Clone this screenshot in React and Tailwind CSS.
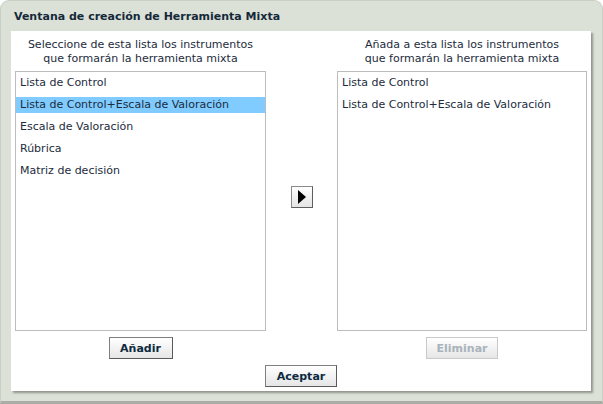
import React from "react";

const font = { fontFamily: '"DejaVu Sans", Verdana, sans-serif' };

function Btn({ children, disabled, w }) {
  return (
    <button
      className={`${w} h-[22px] border text-[11px] font-bold leading-none flex items-center justify-center bg-gradient-to-b from-white to-[#e6e6e6] ${
        disabled
          ? "border-[#c9c9c9] text-[#a9b3bb]"
          : "border-[#7f7f7f] border-b-[#5a5a5a] border-r-[#5a5a5a] text-[#0d2a40]"
      }`}
      style={font}
    >
      {children}
    </button>
  );
}

function List({ items, selected }) {
  return (
    <div className="h-[260px] border border-[#bcbcbc] bg-white pt-[3px] flex flex-col gap-[6px]">
      {items.map((t, i) => (
        <div
          key={i}
          className={`h-[16px] pl-[4px] flex items-center text-[11px] text-[#1c2c3c] whitespace-nowrap ${
            i === selected ? "bg-[#80cbff]" : ""
          }`}
        >
          {t}
        </div>
      ))}
    </div>
  );
}

export default function App() {
  return (
    <div
      className="w-[603px] h-[404px] bg-[#dce1d8] rounded-t-[9px] border border-[#c9cfc4] border-b-[3px] border-b-[#a9ada5] flex flex-col"
      style={font}
    >
      <div className="h-[30px] pl-[13px] flex items-center text-[11px] font-bold text-[#15293a] pt-[2px]">
        Ventana de creación de Herramienta Mixta
      </div>
      <div className="ml-[10px] mr-[11px] h-[360px] bg-white shadow-[2px_2px_2px_rgba(80,85,78,0.55)] px-[4px] pt-[7px] flex flex-col">
        <div className="grid grid-cols-[251px_1fr_250px] text-[11px] leading-[14px] text-[#1c2c3c]">
          <div className="text-center">
            Seleccione de esta lista los instrumentos
            <br />
            que formarán la herramienta mixta
          </div>
          <div />
          <div className="text-center">
            Añada a esta lista los instrumentos
            <br />
            que formarán la herramienta mixta
          </div>
        </div>
        <div className="grid grid-cols-[251px_1fr_250px] mt-[5px]">
          <List
            items={[
              "Lista de Control",
              "Lista de Control+Escala de Valoración",
              "Escala de Valoración",
              "Rúbrica",
              "Matriz de decisión",
            ]}
            selected={1}
          />
          <div className="flex justify-center pt-[115px]">
            <button className="w-[22px] h-[22px] border border-[#8a8a8a] border-b-[#5e5e5e] border-r-[#5e5e5e] bg-gradient-to-b from-white to-[#e4e4e4] flex items-center justify-center">
              <svg width="8" height="14" viewBox="0 0 8 14">
                <polygon points="0,0 8,7 0,14" fill="#000" />
              </svg>
            </button>
          </div>
          <List
            items={["Lista de Control", "Lista de Control+Escala de Valoración"]}
            selected={-1}
          />
        </div>
        <div className="grid grid-cols-[251px_1fr_250px] mt-[6px]">
          <div className="flex justify-center">
            <Btn w="w-[64px]">Añadir</Btn>
          </div>
          <div />
          <div className="flex justify-center">
            <Btn w="w-[72px]" disabled>
              Eliminar
            </Btn>
          </div>
        </div>
        <div className="flex justify-center mt-[6px]">
          <Btn w="w-[72px]">Aceptar</Btn>
        </div>
      </div>
    </div>
  );
}
